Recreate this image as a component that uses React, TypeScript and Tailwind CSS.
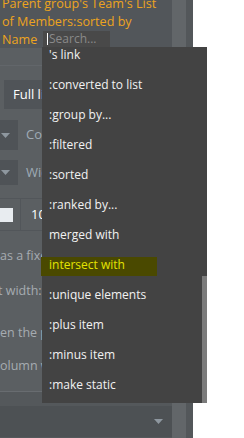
const menuItems = [
  "'s link",
  ":converted to list",
  ":group by...",
  ":filtered",
  ":sorted",
  ":ranked by...",
  "merged with",
  "intersect with",
  ":unique elements",
  ":plus item",
  ":minus item",
  ":make static",
];

function Caret() {
  return (
    <svg width="9" height="5" viewBox="0 0 9 5" className="block">
      <path d="M0 0h9L4.5 5z" fill="#8e979f" />
    </svg>
  );
}

function SelectRow({ label, top }: { label: string; top: string }) {
  return (
    <div className={`flex items-center ${top}`}>
      <div className="flex h-full w-[18px] items-center bg-[#4f5357] pl-[1px]">
        <Caret />
      </div>
      <span className="ml-[8px] whitespace-nowrap text-[13px] text-[#9fabb6]">{label}</span>
    </div>
  );
}

export default function App() {
  return (
    <div
      className="relative h-[438px] w-[244px] overflow-hidden bg-white"
      style={{ fontFamily: '"Open Sans", "Liberation Sans", sans-serif' }}
    >
      <div className="flex h-full w-[193px]">
        <div className="flex w-[172px] flex-col overflow-hidden bg-[#5b5f62]">
          <div className="h-[48px] shrink-0 overflow-hidden bg-[#52565a] px-[2px]">
            <p className="-mt-[5px] text-[12.6px] leading-[18px] text-[#eda41e]">
              Parent group's Team's List
              <br />
              of Members:sorted by
              <br />
              Name
            </p>
          </div>
          <div className="mt-[17px] h-px shrink-0 bg-[#62666a]" />
          <div className="mx-[4px] mt-[14px] flex h-[29px] shrink-0 items-center bg-[#505458] pl-[9px] text-[13px] text-white">
            Full list
          </div>
          <SelectRow label="Color" top="mt-[11px] h-[30px]" />
          <SelectRow label="Width" top="mt-[10px] h-[25px]" />
          <div className="mt-[13px] h-px shrink-0 bg-[#52565a]" />
          <div className="flex h-[31px] shrink-0 items-center">
            <div className="h-[14px] w-[13px] bg-[#e8ecf0]" />
            <div className="ml-[7px] h-full w-px bg-[#52565a]" />
            <span className="ml-[10px] text-[13px] text-white">10</span>
          </div>
          <div className="h-px shrink-0 bg-[#52565a]" />
          <div className="flex flex-col whitespace-nowrap text-[12.5px] leading-[18px] text-[#a6acb1]">
            <span className="mt-[16px]">as a fixed number of rows</span>
            <span className="-ml-[2px] mt-[17px]">t width: 100%</span>
            <span className="mt-[24px]">en the page is resized</span>
            <span className="mt-[15px]">olumn width</span>
          </div>
          <div className="mt-[16px] h-px shrink-0 bg-[#686c70]" />
          <div className="flex-1 bg-[#54585b] pt-[14px]">
            <div className="flex h-[31px] items-center justify-end bg-[#4d5154] pr-[9px]">
              <Caret />
            </div>
          </div>
        </div>
        <div className="w-[14px] bg-[#626669]" />
        <div className="w-[7px] bg-[#53575a]" />
      </div>

      <div className="absolute left-[43px] top-[31px] flex h-[16px] w-[67px] items-center bg-[#494949] pl-[4px]">
        <span className="h-[12px] w-px bg-white" />
        <span className="ml-px text-[12px] leading-none text-[#8a8a8a]">Search...</span>
      </div>

      <div className="absolute left-[42px] top-[47px] h-[356px] w-[165px] overflow-hidden bg-[#434343]">
        {menuItems.map((item) =>
          item === "intersect with" ? (
            <div key={item} className="h-[30px]">
              <div className="h-[19px] w-[115px] whitespace-nowrap bg-[#4a4900] pl-[7px] text-[12px] leading-[16px] text-[#e4e400]">
                {item}
              </div>
            </div>
          ) : (
            <div
              key={item}
              className="h-[30px] whitespace-nowrap pl-[7px] text-[12px] leading-[16px] text-[#f2f2f2]"
            >
              {item}
            </div>
          ),
        )}
        <div className="absolute bottom-0 right-0 top-[229px] w-[5px] bg-[#7b7b7b]" />
      </div>
      <div className="absolute left-[41px] top-[257px] h-[19px] w-px bg-[#4a4900]" />
    </div>
  );
}
